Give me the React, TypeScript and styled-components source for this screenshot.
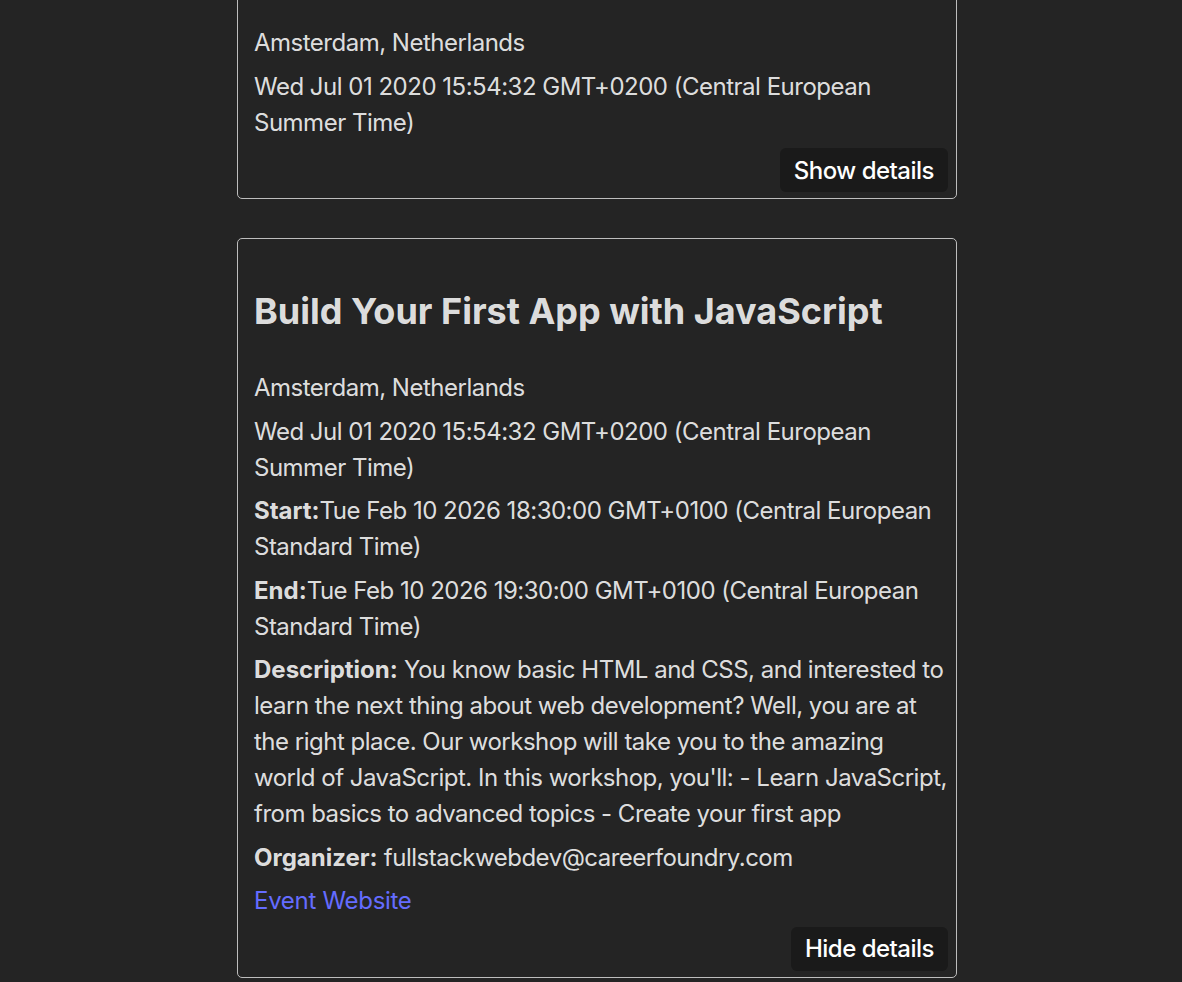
import styled, { createGlobalStyle } from "styled-components";

const GlobalStyle = createGlobalStyle`
  html, body {
    margin: 0;
    padding: 0;
    background-color: #242424;
  }
  body {
    font-family: Inter, "Noto Sans", sans-serif;
    font-size: 24px;
    line-height: 36px;
    color: rgba(255, 255, 255, 0.87);
    -webkit-font-smoothing: antialiased;
  }
`;

type EventData = {
  id: string;
  summary: string;
  location: string;
  created: string;
  start: string;
  end: string;
  description: string;
  organizer: string;
  link: string;
  expanded: boolean;
};

const events: EventData[] = [
  {
    id: "1",
    summary: "Learn JavaScript",
    location: "Amsterdam, Netherlands",
    created: "Wed Jul 01 2020 15:54:32 GMT+0200 (Central European Summer Time)",
    start: "Tue Feb 10 2026 18:30:00 GMT+0100 (Central European Standard Time)",
    end: "Tue Feb 10 2026 19:30:00 GMT+0100 (Central European Standard Time)",
    description: "",
    organizer: "fullstackwebdev@careerfoundry.com",
    link: "#",
    expanded: false,
  },
  {
    id: "2",
    summary: "Build Your First App with JavaScript",
    location: "Amsterdam, Netherlands",
    created: "Wed Jul 01 2020 15:54:32 GMT+0200 (Central European Summer Time)",
    start: "Tue Feb 10 2026 18:30:00 GMT+0100 (Central European Standard Time)",
    end: "Tue Feb 10 2026 19:30:00 GMT+0100 (Central European Standard Time)",
    description:
      "You know basic HTML and CSS, and interested to learn the next thing about web development? Well, you are at the right place. Our workshop will take you to the amazing world of JavaScript. In this workshop, you'll: - Learn JavaScript, from basics to advanced topics - Create your first app",
    organizer: "fullstackwebdev@careerfoundry.com",
    link: "#",
    expanded: true,
  },
];

function Event({ event }: { event: EventData }) {
  return (
    <Card>
      <Title>{event.summary}</Title>
      <Line>{event.location}</Line>
      <Line>{event.created}</Line>
      {event.expanded && (
        <>
          <Line>
            <Label>Start:</Label>
            {event.start}
          </Line>
          <Line>
            <Label>End:</Label>
            {event.end}
          </Line>
          <Line>
            <Label>Description:</Label> {event.description}
          </Line>
          <Line>
            <Label>Organizer:</Label> {event.organizer}
          </Line>
          <Line>
            <EventLink href={event.link}>Event Website</EventLink>
          </Line>
        </>
      )}
      <Actions>
        <DetailsButton>
          {event.expanded ? "Hide details" : "Show details"}
        </DetailsButton>
      </Actions>
    </Card>
  );
}

export default function App() {
  return (
    <>
      <GlobalStyle />
      <Page>
        <EventList>
          {events.map((event) => (
            <li key={event.id}>
              <Event event={event} />
            </li>
          ))}
        </EventList>
      </Page>
    </>
  );
}

const Page = styled.main`
  display: flex;
  justify-content: center;
  padding-left: 12px;
`;

const EventList = styled.ul`
  list-style: none;
  margin: -107px 0 0;
  padding: 0;
  width: 720px;
  display: flex;
  flex-direction: column;
  gap: 39px;
`;

const Card = styled.div`
  border: 1px solid #bdbdbd;
  border-radius: 5px;
  padding: 15px 8px 6px 16px;
`;

const Title = styled.h2`
  font-size: 36px;
  line-height: 54px;
  font-weight: 700;
  margin: 30px 0 32px;
`;

const Line = styled.p`
  margin: 0 0 7.5px;
  letter-spacing: -0.5px;
`;

const Label = styled.b`
  font-weight: 700;
  letter-spacing: 0;
`;

const EventLink = styled.a`
  color: #646cff;
  text-decoration: none;
  letter-spacing: -0.3px;
`;

const Actions = styled.div`
  display: flex;
  justify-content: flex-end;
`;

const DetailsButton = styled.button`
  font-family: Inter, "Noto Sans", sans-serif;
  font-size: 24px;
  line-height: 29px;
  font-weight: 500;
  letter-spacing: -0.5px;
  color: #ffffff;
  background-color: #1a1a1a;
  border: none;
  border-radius: 6px;
  padding: 7.5px 14px;
  cursor: pointer;
`;
